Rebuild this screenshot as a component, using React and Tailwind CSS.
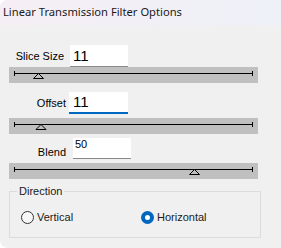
import React from 'react';

function Track({ thumb }) {
  return (
    <div className="ml-[9px] w-[249px] h-[16px] bg-[#c0c0c0]">
      <svg width="249" height="16" viewBox="0 0 249 16" className="block">
        <line x1="5" y1="6.5" x2="244" y2="6.5" stroke="#000" strokeWidth="1" />
        <line x1="5.5" y1="4" x2="5.5" y2="9" stroke="#000" strokeWidth="1" />
        <line x1="243.5" y1="4" x2="243.5" y2="9" stroke="#000" strokeWidth="1" />
        <polygon
          points={`${thumb},6.5 ${thumb - 5},11.5 ${thumb + 5},11.5`}
          fill="#c0c0c0"
          stroke="#000"
          strokeWidth="1"
        />
      </svg>
    </div>
  );
}

function Radio({ checked, label }) {
  return (
    <div className="flex items-center">
      {checked ? (
        <span className="flex items-center justify-center w-[13px] h-[13px] rounded-full bg-[#0067c0]">
          <span className="w-[5px] h-[5px] rounded-full bg-white" />
        </span>
      ) : (
        <span className="w-[13px] h-[13px] rounded-full border border-[#333] bg-[#f7f7f7]" />
      )}
      <span className="ml-[3px] text-[11px] leading-[13px] text-[#1a1a1a]">{label}</span>
    </div>
  );
}

export default function App() {
  return (
    <div
      className="w-[281px] h-[248px] overflow-hidden bg-[#f0f0f0] rounded-tl-[8px] rounded-bl-[8px]"
      style={{ fontFamily: '"Liberation Sans", Arial, sans-serif' }}
    >
      {/* title bar */}
      <div className="h-[25px] flex items-center pl-[3px] bg-gradient-to-r from-[#f6eef5] to-[#eef1f8]">
        <span className="text-[11.2px] text-[#1a1a1a]" style={{ fontFamily: '"Noto Sans", sans-serif' }}>
          Linear Transmission Filter Options
        </span>
      </div>

      {/* Slice Size */}
      <div className="mt-[20px] flex items-center h-[22px]">
        <div className="w-[64px] text-right text-[11px] text-black">Slice Size</div>
        <div className="ml-[6px] w-[58px] h-[22px] bg-white border-b border-[#8a8a8a] pl-[3px] text-[15px] leading-[21px] text-black">
          11
        </div>
      </div>
      <Track thumb={29.5} />

      {/* Offset */}
      <div className="mt-[9px] flex items-center h-[22px]">
        <div className="w-[66px] text-right text-[11px] text-black">Offset</div>
        <div className="ml-[3px] w-[59px] h-[22px] bg-white border-b-2 border-[#0067c0] pl-[4px] text-[15px] leading-[20px] text-black">
          11
        </div>
      </div>
      <div className="mt-[4px]">
        <Track thumb={32} />
      </div>

      {/* Blend */}
      <div className="mt-[4px] flex items-end h-[21px]">
        <div className="w-[66px] text-right text-[11px] leading-[14px] text-black">Blend</div>
        <div className="ml-[7px] w-[58px] h-[21px] bg-white border-b border-[#8a8a8a] pl-[2px] text-[11px] leading-[13px] text-black">
          50
        </div>
      </div>
      <div className="mt-[4px]">
        <Track thumb={185.5} />
      </div>

      {/* Direction */}
      <fieldset className="mt-[6px] ml-[9px] w-[252px] h-[53px] border border-[#dcdcdc]">
        <legend className="ml-[7px] px-[2px] text-[11px] leading-[13px] text-[#1a1a1a]">Direction</legend>
        <div className="mt-[13px] flex items-center pl-[11px]">
          <div className="w-[120px]">
            <Radio label="Vertical" />
          </div>
          <Radio checked label="Horizontal" />
        </div>
      </fieldset>
    </div>
  );
}
